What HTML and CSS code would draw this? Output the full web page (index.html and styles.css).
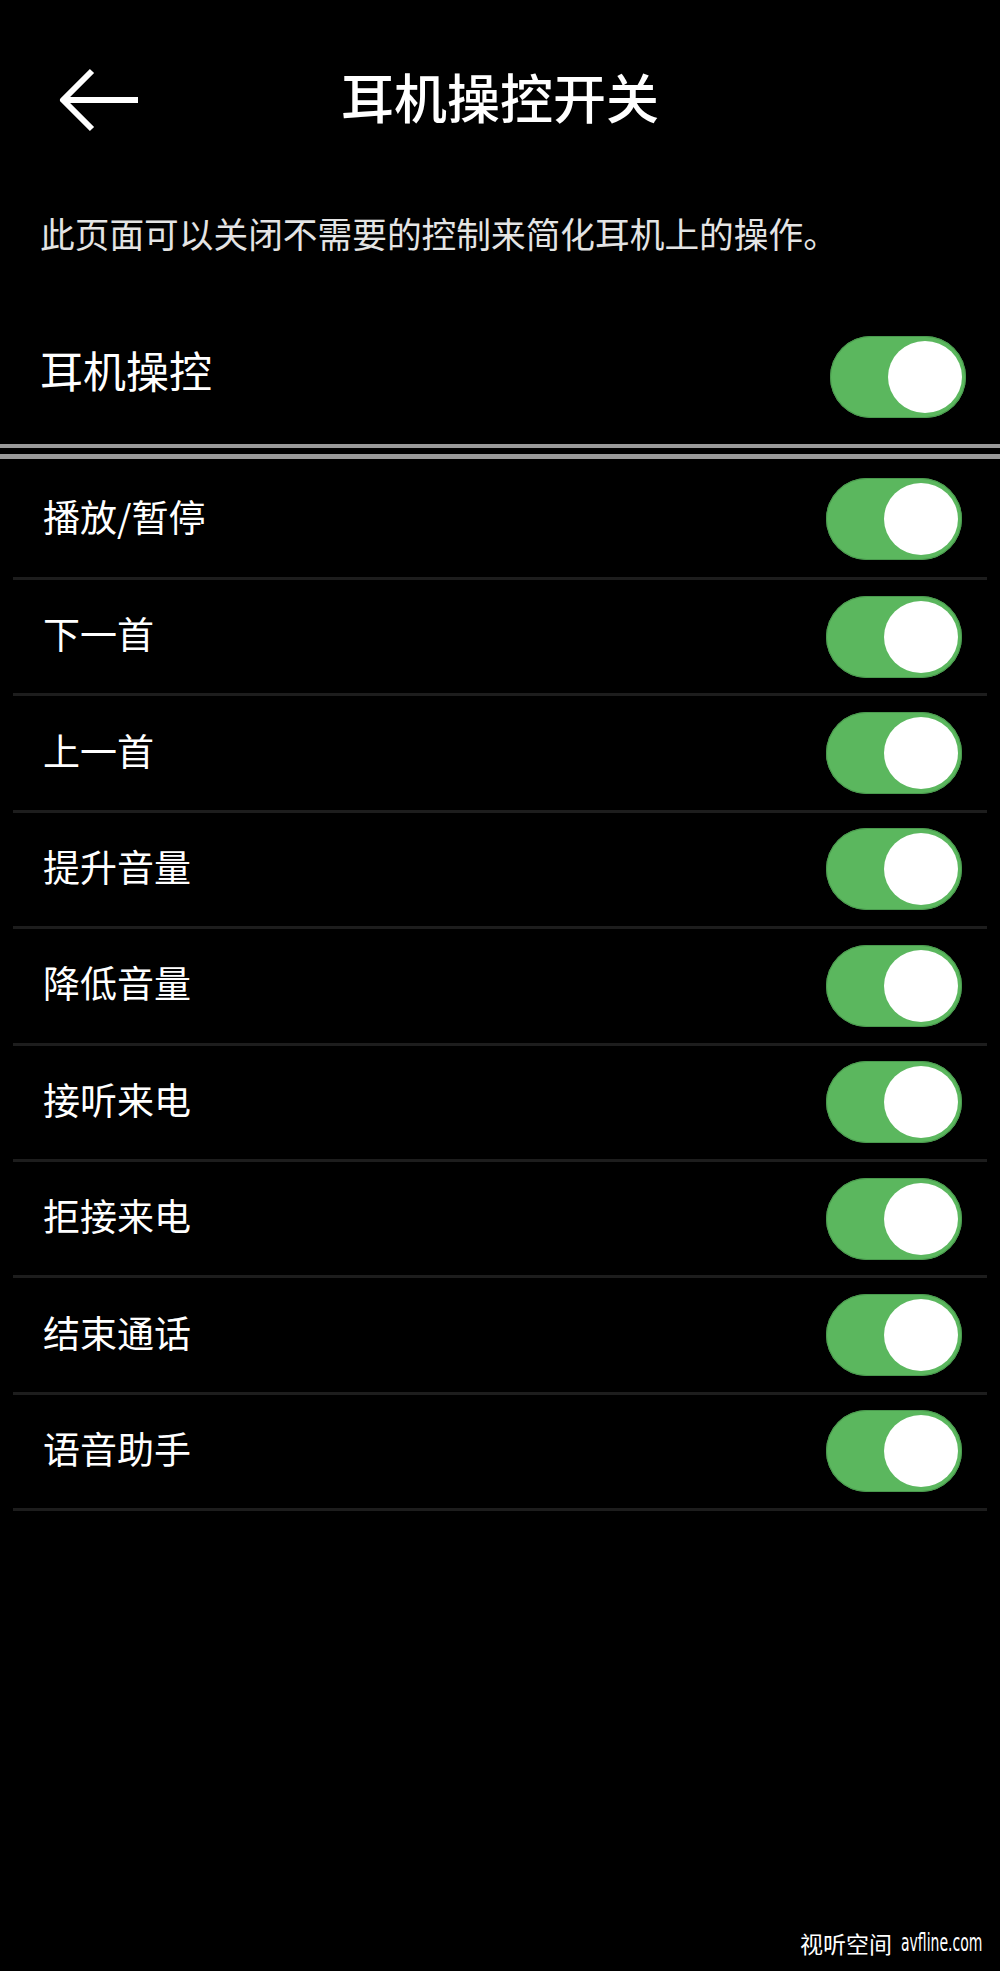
FILE: index.html
```html
<!DOCTYPE html>
<html lang="zh-CN">
<head>
<meta charset="utf-8">
<title>耳机操控开关</title>
<link rel="stylesheet" href="styles.css">
</head>
<body>
<div class="page">
  <header class="topbar">
    <div class="back">
      <svg width="84" height="64" viewBox="0 0 84 64" aria-hidden="true">
        <path d="M5 32 H80 M34 3 L5 32 L34 61" stroke="#fff" stroke-width="6" fill="none" stroke-linejoin="round"/>
      </svg>
    </div>
    <h1 class="title">耳机操控开关</h1>
    <div class="spacer"></div>
  </header>

  <p class="desc">此页面可以关闭不需要的控制来简化耳机上的操作。</p>

  <div class="master">
    <span class="master-label">耳机操控</span>
    <span class="toggle on"><span class="knob"></span></span>
  </div>

  <div class="double-rule"></div>

  <ul class="list">
    <li class="row first"><span class="label">播放/暂停</span><span class="toggle on"><span class="knob"></span></span></li>
    <li class="row"><span class="label">下一首</span><span class="toggle on"><span class="knob"></span></span></li>
    <li class="row"><span class="label">上一首</span><span class="toggle on"><span class="knob"></span></span></li>
    <li class="row"><span class="label">提升音量</span><span class="toggle on"><span class="knob"></span></span></li>
    <li class="row"><span class="label">降低音量</span><span class="toggle on"><span class="knob"></span></span></li>
    <li class="row"><span class="label">接听来电</span><span class="toggle on"><span class="knob"></span></span></li>
    <li class="row"><span class="label">拒接来电</span><span class="toggle on"><span class="knob"></span></span></li>
    <li class="row"><span class="label">结束通话</span><span class="toggle on"><span class="knob"></span></span></li>
    <li class="row"><span class="label">语音助手</span><span class="toggle on"><span class="knob"></span></span></li>
  </ul>

  <div class="watermark"><span class="wm-cn">视听空间</span><span class="wm-latin"><span>avfline.com</span></span></div>
</div>
</body>
</html>
```

FILE: styles.css
```css
html, body {
  margin: 0;
  padding: 0;
  background: #000;
}

body {
  font-family: "Noto Sans CJK SC", "Noto Sans", sans-serif;
  color: #fff;
}

.page {
  position: relative;
  width: 1000px;
  min-height: 1971px;
  background: #000;
}

.topbar {
  display: grid;
  grid-template-columns: 1fr auto 1fr;
  align-items: center;
  height: 200px;
}

.back {
  padding-left: 58px;
  display: flex;
  align-items: center;
}

.back svg {
  display: block;
}

.title {
  margin: 0 0 8px 0;
  font-size: 53px;
  line-height: 1;
  font-weight: 500;
  color: #fff;
  letter-spacing: 0;
}

.desc {
  margin: 0;
  box-sizing: border-box;
  height: 110px;
  padding: 15px 0 0 40px;
  font-size: 34.7px;
  line-height: 36px;
  color: #e4e4e4;
}

.master {
  display: flex;
  align-items: center;
  justify-content: space-between;
  height: 134px;
  padding: 0 34px 0 40px;
}

.master-label {
  font-size: 43px;
  line-height: 1;
  color: #fff;
  padding-bottom: 16px;
}

.double-rule {
  height: 6px;
  border-top: 4px solid #9a9a9a;
  border-bottom: 5px solid #9a9a9a;
}

.list {
  list-style: none;
  margin: 0 13px;
  padding: 0;
}

.row {
  display: flex;
  align-items: center;
  justify-content: space-between;
  box-sizing: border-box;
  height: 116.4px;
  padding: 0 25px 0 30px;
  border-bottom: 3px solid #1d1d1d;
}

.row.first {
  height: 121px;
  padding-top: 2px;
}

.label {
  font-size: 37px;
  line-height: 1;
  color: #fff;
  padding-bottom: 6px;
}

.toggle {
  position: relative;
  display: inline-block;
  width: 136px;
  height: 82px;
  border-radius: 41px;
  background: #5bb75e;
  box-shadow: inset 0 0 0 1px #4a9a4e;
  flex-shrink: 0;
}

.toggle .knob {
  position: absolute;
  right: 4px;
  top: 5px;
  width: 74px;
  height: 72px;
  border-radius: 50%;
  background: #fff;
}

.watermark {
  position: absolute;
  right: 16px;
  bottom: 16px;
  display: flex;
  align-items: flex-end;
  color: #fff;
  white-space: nowrap;
}

.wm-cn {
  font-size: 23px;
  line-height: 1;
  font-weight: 400;
}

.wm-latin {
  display: inline-block;
  width: 83px;
  margin-left: 9px;
  font-family: "DejaVu Sans", sans-serif;
  font-size: 25px;
  line-height: 1;
}

.wm-latin span {
  display: inline-block;
  transform: scaleX(0.56);
  transform-origin: 0 50%;
}
```
